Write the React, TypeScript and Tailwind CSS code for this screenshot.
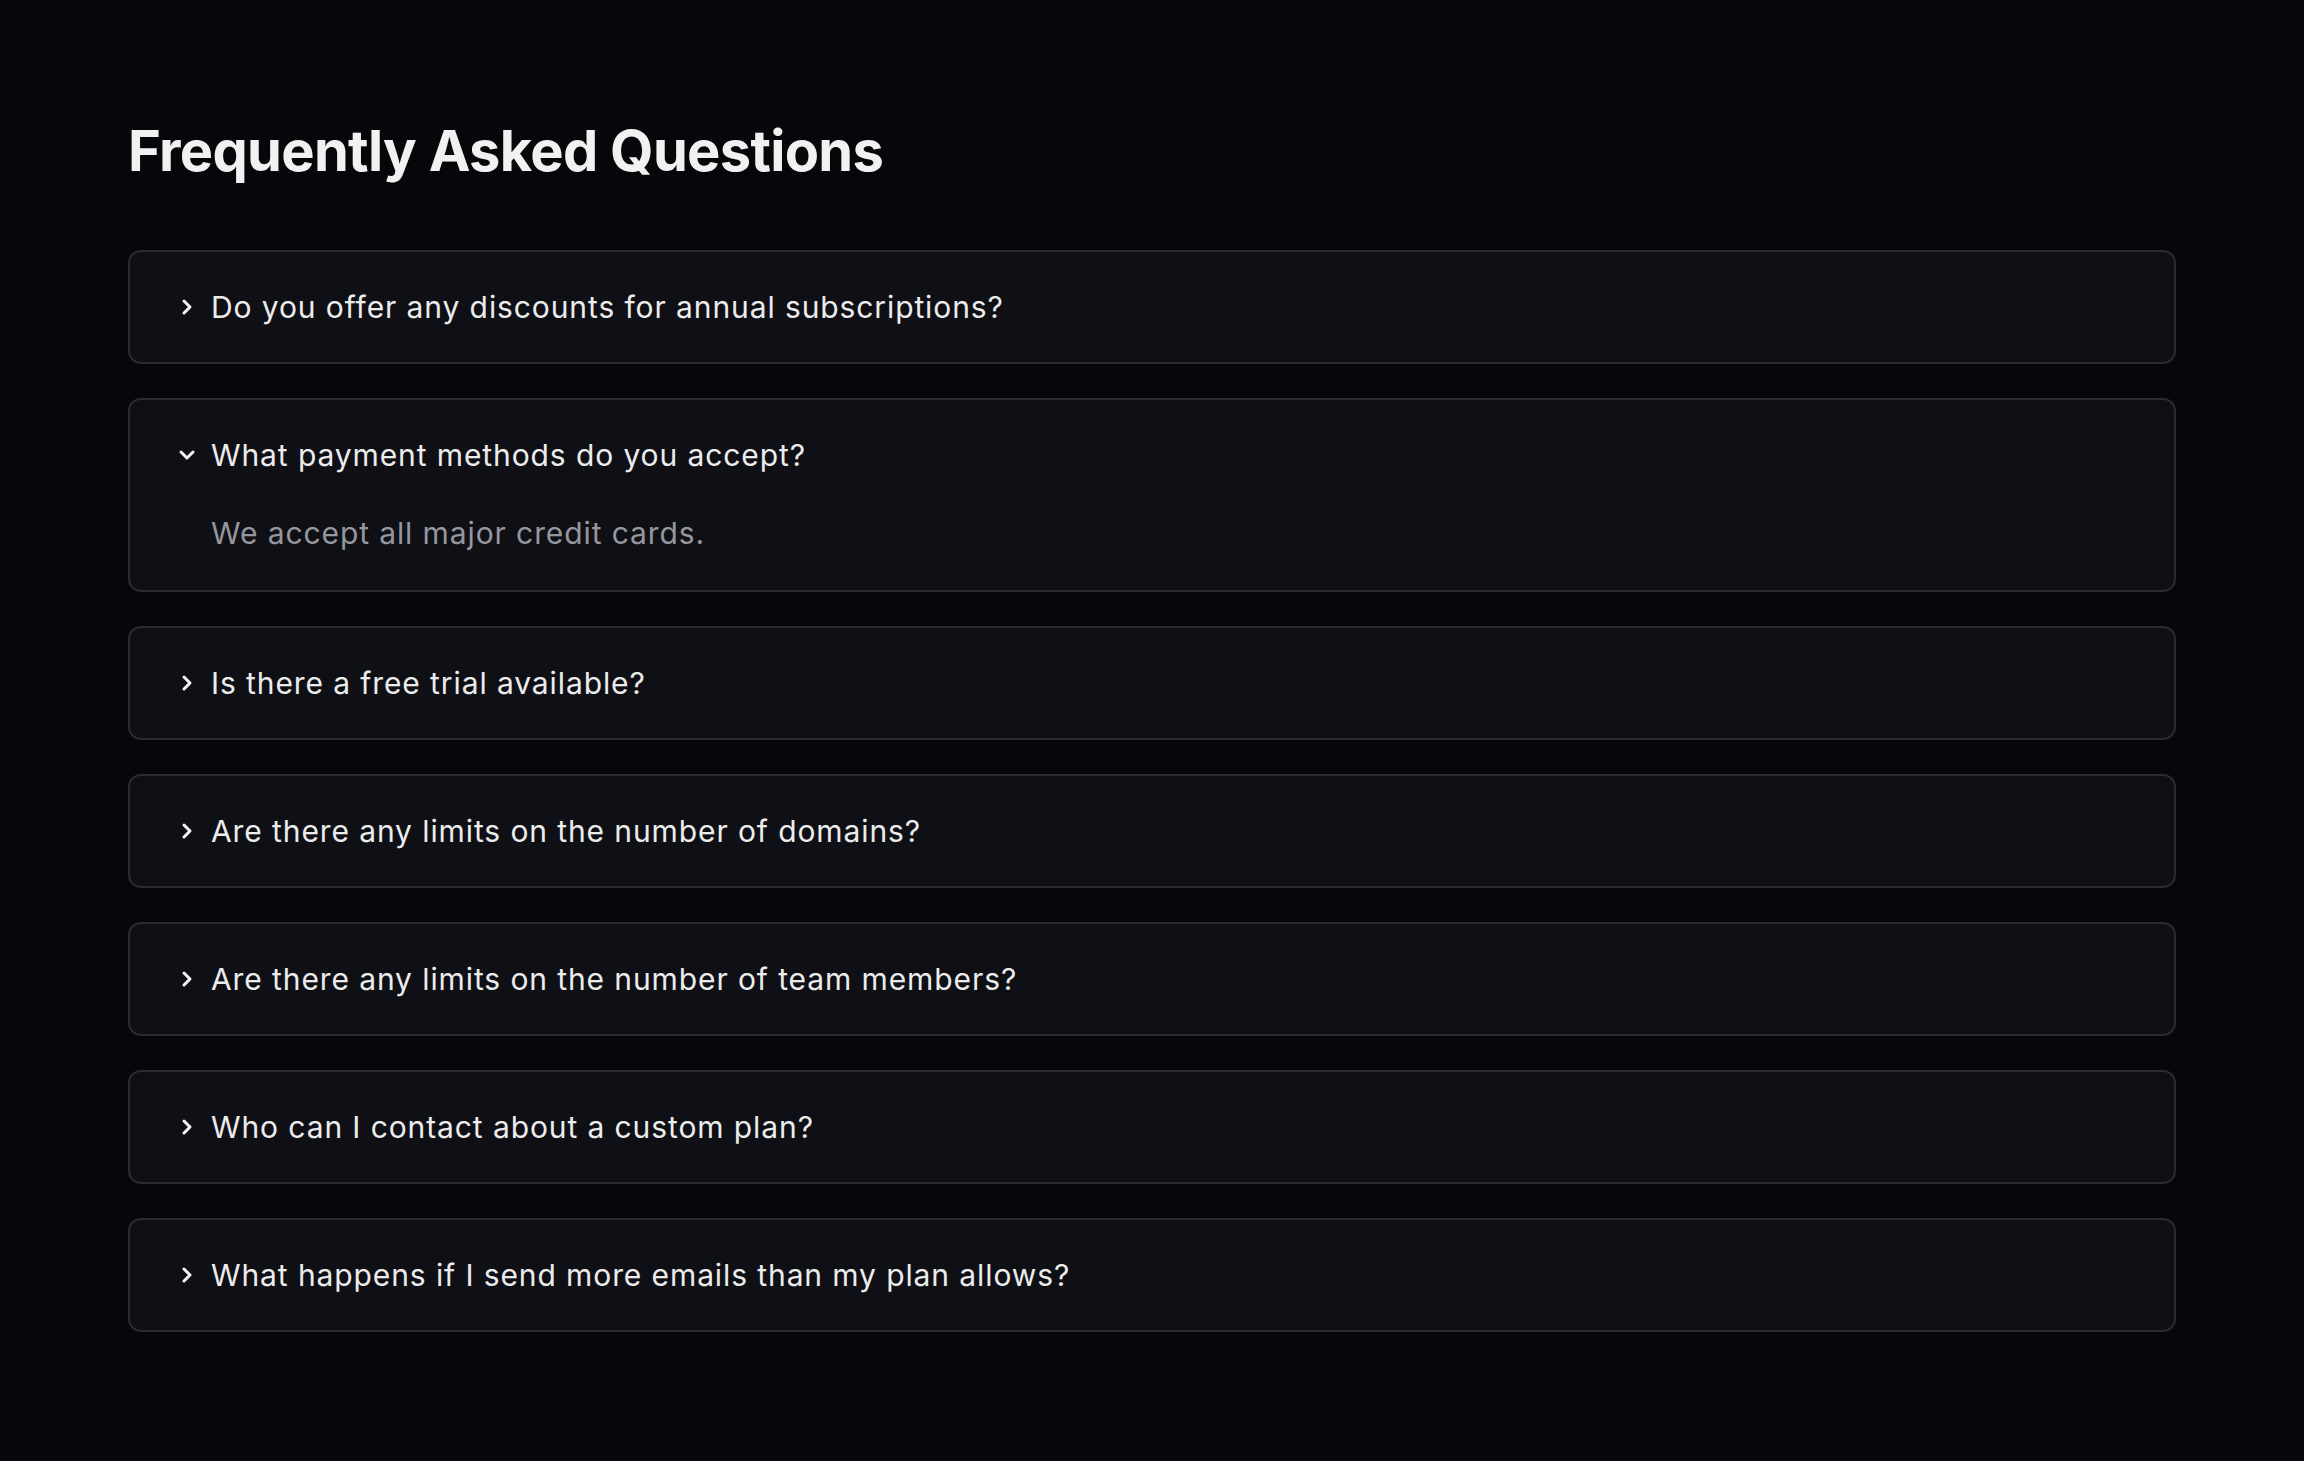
import { useState } from 'react';
import { ChevronRight, ChevronDown } from 'lucide-react';

const faqs = [
  {
    q: 'Do you offer any discounts for annual subscriptions?',
    a: 'Yes, annual plans come with two months free.',
  },
  {
    q: 'What payment methods do you accept?',
    a: 'We accept all major credit cards.',
  },
  {
    q: 'Is there a free trial available?',
    a: 'Yes, every plan starts with a free trial.',
  },
  {
    q: 'Are there any limits on the number of domains?',
    a: 'No, you can add as many domains as you need.',
  },
  {
    q: 'Are there any limits on the number of team members?',
    a: 'No, invite your whole team at no extra cost.',
  },
  {
    q: 'Who can I contact about a custom plan?',
    a: 'Reach out to our sales team and we will help you out.',
  },
  {
    q: 'What happens if I send more emails than my plan allows?',
    a: 'We will let you know before any overage is charged.',
  },
];

const App = () => {
  const [open, setOpen] = useState<number | null>(1);

  return (
    <div className="min-h-screen bg-[#07070b] px-[128px] pt-[123px] pb-[120px] font-['Inter','Noto_Sans',sans-serif]">
      <h1 className="text-[56px] leading-none font-bold text-[#f1f1f1] tracking-[-0.0125em]">
        Frequently Asked Questions
      </h1>

      <div className="mt-[71px] flex flex-col gap-[34px]">
        {faqs.map((item, i) => {
          const isOpen = open === i;
          return (
            <div
              key={item.q}
              className="rounded-[13px] border-2 border-[#2b2c32] bg-[#0f1015]"
            >
              <button
                type="button"
                onClick={() => setOpen(isOpen ? null : i)}
                className="flex w-full items-center gap-3 pl-[45px] pr-8 py-8 text-left"
              >
                {isOpen ? (
                  <ChevronDown size={24} strokeWidth={3} className="shrink-0 text-[#f4f4f4]" />
                ) : (
                  <ChevronRight size={24} strokeWidth={3} className="shrink-0 text-[#f4f4f4]" />
                )}
                <span className="text-[30px] leading-[46px] tracking-[0.9px] text-[#ececec]">
                  {item.q}
                </span>
              </button>
              {isOpen && (
                <p className="pl-[81px] pr-8 pb-[34px] text-[30px] leading-[46px] tracking-[0.9px] text-[#96979e]">
                  {item.a}
                </p>
              )}
            </div>
          );
        })}
      </div>
    </div>
  );
};

export default App;
